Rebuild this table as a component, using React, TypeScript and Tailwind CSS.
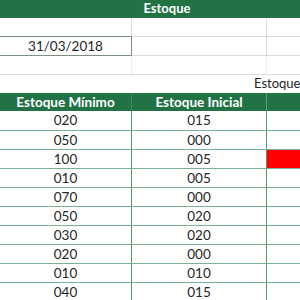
const font = { fontFamily: '"Lato", "Open Sans", sans-serif' }

const rows = [
  ['020', '015', false],
  ['050', '000', false],
  ['100', '005', true],
  ['010', '005', false],
  ['070', '000', false],
  ['050', '020', false],
  ['030', '020', false],
  ['020', '000', false],
  ['010', '010', false],
  ['040', '015', false],
] as const

export default function App() {
  return (
    <div className="w-[300px] h-[300px] overflow-hidden bg-white text-[#262626]" style={font}>
      {/* título */}
      <div className="h-[18px] bg-[#217346] flex items-center justify-center">
        <span className="text-white font-bold text-[13px] pl-[34px]">Estoque</span>
      </div>

      <div className="h-[19px] flex border-b border-[#dcdcdc]">
        <div className="w-[132px] border-r border-[#dcdcdc]" />
        <div className="w-[135px] border-r border-[#dcdcdc]" />
        <div className="flex-1" />
      </div>

      <div className="h-[19px] flex border-b border-[#dcdcdc]">
        <div className="w-[132px] -mt-px h-[20px] border border-l-0 border-[#7a8f80] flex items-center justify-center text-[13.5px]">
          31/03/2018
        </div>
        <div className="w-[135px] border-r border-[#dcdcdc]" />
        <div className="flex-1" />
      </div>

      <div className="h-[19px] flex border-b border-[#dcdcdc]">
        <div className="w-[132px] border-r border-[#eeeeee]" />
        <div className="w-[135px] border-r border-[#eeeeee]" />
        <div className="flex-1" />
      </div>

      <div className="h-[18px] flex items-center">
        <span className="ml-[254px] text-[13px] whitespace-nowrap">Estoque</span>
      </div>

      {/* cabeçalho */}
      <div className="h-[18px] flex bg-[#217346] text-white font-bold text-[13.5px]">
        <div className="w-[132px] border-r border-[#3f8a60] flex items-center justify-center">Estoque Mínimo</div>
        <div className="w-[135px] border-r border-[#5d9f7c] flex items-center justify-center">Estoque Inicial</div>
        <div className="flex-1" />
      </div>

      {rows.map(([min, ini, red], i) => (
        <div key={i} className={`flex border-b border-[#79b394] ${i === 0 ? 'h-[20px]' : 'h-[19px]'}`}>
          <div className="w-[132px] border-r border-[#4f9a72] flex items-center justify-center text-[13.5px]">{min}</div>
          <div className="w-[135px] border-r border-[#4f9a72] flex items-center justify-center text-[13.5px]">{ini}</div>
          <div className={`flex-1 ${red ? 'bg-[#ff0000]' : ''}`} />
        </div>
      ))}
    </div>
  )
}
